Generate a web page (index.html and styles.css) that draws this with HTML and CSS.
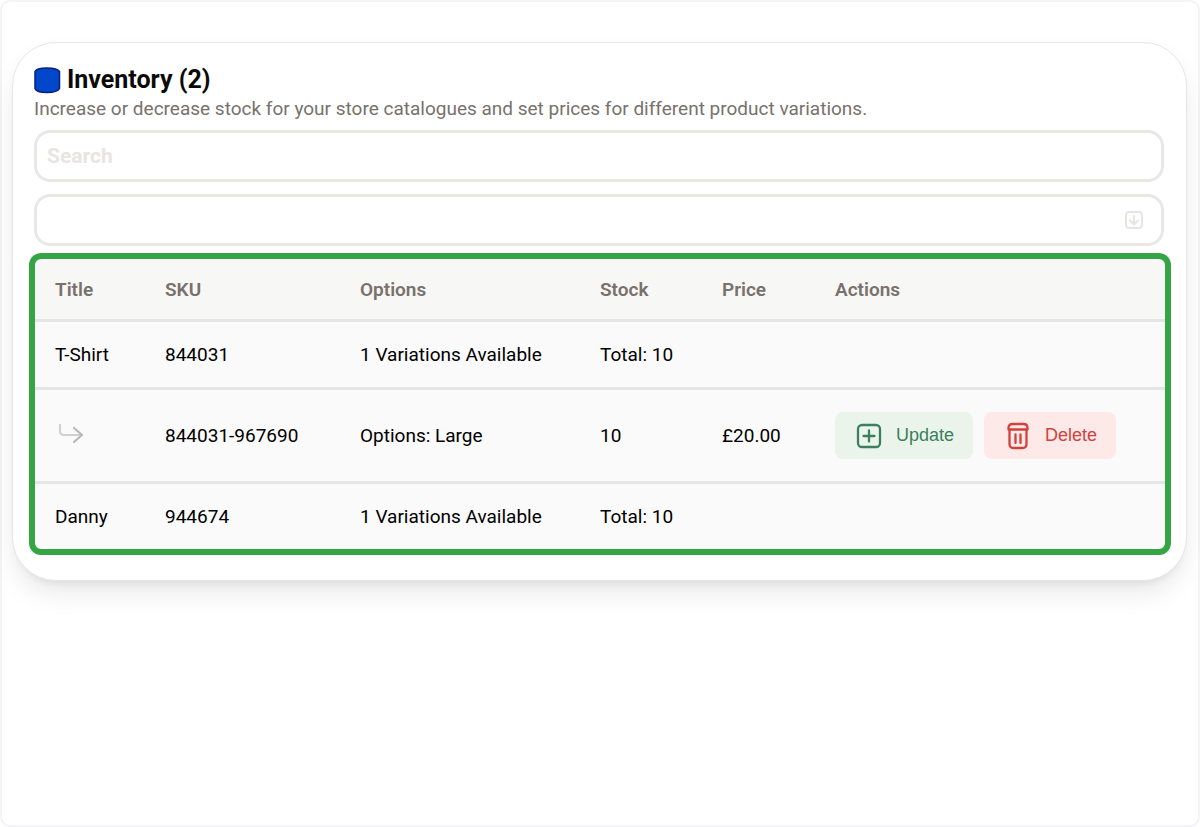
FILE: index.html
```html
<!DOCTYPE html>
<html lang="en">
<head>
  <meta charset="UTF-8" />
  <meta name="viewport" content="width=device-width, initial-scale=1.0" />
  <title>Inventory</title>
  <link rel="stylesheet" href="styles.css">
</head>
<body>
  <main class="page">
    <section class="card">
      <header class="card-header">
        <h1>
          <svg class="logo" viewBox="0 0 27 27" aria-hidden="true">
            <path d="M1 4.500C2 2 7 1 13 1S24 2 25.500 4.500V21.500C24 24.500 19 25.500 13 25.500S2 24.500 1 21.500Z" fill="#0246cb" stroke="#06217c" stroke-width="1.500"/>
          </svg>
          Inventory (2)
        </h1>
        <p>Increase or decrease stock for your store catalogues and set prices for different product variations.</p>
      </header>

      <div class="filters">
        <input class="field" type="text" placeholder="Search" aria-label="Search">
        <div class="select-box">
          <select class="field" aria-label="Catalogue">
            <option></option>
          </select>
          <svg class="select-icon" viewBox="0 0 20 20" fill="none" stroke="#e7e5e4" stroke-width="2" stroke-linecap="round" stroke-linejoin="round" aria-hidden="true">
            <rect x="2" y="2" width="16" height="16" rx="3"/>
            <path d="M10 6v8M6 10.500l4 4 4-4"/>
          </svg>
        </div>
      </div>

      <div class="table-box">
        <table>
          <thead>
            <tr>
              <th class="col-title">Title</th>
              <th class="col-sku">SKU</th>
              <th class="col-options">Options</th>
              <th class="col-stock">Stock</th>
              <th class="col-price">Price</th>
              <th>Actions</th>
            </tr>
          </thead>
          <tbody>
            <tr>
              <td>T-Shirt</td>
              <td>844031</td>
              <td>1 Variations Available</td>
              <td>Total: 10</td>
              <td></td>
              <td></td>
            </tr>
            <tr class="variation">
              <td>
                <svg class="arrow" viewBox="0 0 32 24" fill="none" stroke-width="2.200" stroke-linecap="round" stroke-linejoin="round" aria-hidden="true">
                  <path d="M5 1v6q0 4 4 4h17" stroke="#d0d0d0"/>
                  <path d="M19 4l8 7-8 7" stroke="#b8b8b8"/>
                </svg>
              </td>
              <td>844031-967690</td>
              <td>Options: Large</td>
              <td>10</td>
              <td>£20.00</td>
              <td>
                <div class="actions">
                  <button type="button" class="btn btn-update">
                    <svg viewBox="0 0 28 28" fill="none" stroke="currentColor" stroke-width="2.300" stroke-linecap="round" aria-hidden="true">
                      <rect x="3" y="3" width="22" height="22" rx="4"/>
                      <path d="M14 8.500v11M8.500 14h11"/>
                    </svg>
                    Update
                  </button>
                  <button type="button" class="btn btn-delete">
                    <svg viewBox="0 0 28 28" fill="none" stroke="currentColor" stroke-width="2.300" stroke-linecap="round" stroke-linejoin="round" aria-hidden="true">
                      <path d="M4.500 7.500V6q0-4 4-4h11q4 0 4 4v1.500z"/>
                      <path d="M5.500 8v14q0 4 4 4h9q4 0 4-4V8"/>
                      <path d="M11.500 12.500v8.500M16.500 12.500v8.500"/>
                    </svg>
                    Delete
                  </button>
                </div>
              </td>
            </tr>
            <tr>
              <td>Danny</td>
              <td>944674</td>
              <td>1 Variations Available</td>
              <td>Total: 10</td>
              <td></td>
              <td></td>
            </tr>
          </tbody>
        </table>
      </div>
    </section>
  </main>
</body>
</html>
```
FILE: styles.css
```css
*, *::before, *::after {
  box-sizing: border-box;
}

body {
  margin: 0;
  background: #fff;
  color: #0c0a09;
  font-family: Roboto, sans-serif;
  font-size: 19px;
}

.page {
  min-height: 100vh;
  padding: 40px 11px 40px 10px;
  border: 2px solid #f3f3f8;
  border-radius: 10px;
}

.card {
  padding: 22px 22px 31px 21px;
  border: 1px solid #e7e7e7;
  border-radius: 44px;
  background: #fff;
  box-shadow: 0 14px 28px -4px rgba(0, 0, 0, 0.1), 0 6px 10px -6px rgba(0, 0, 0, 0.1);
}

/* header */
.card-header h1 {
  display: flex;
  align-items: center;
  gap: 6px;
  margin: 0;
  font-size: 25px;
  line-height: 30px;
  font-weight: 700;
}
.card-header p {
  margin: 0;
  line-height: 28px;
  color: #78716c;
}
.logo {
  width: 27px;
  height: 27px;
}

/* search and select */
.filters {
  display: flex;
  flex-direction: column;
  gap: 12px;
  margin: 7px 0 13px;
}
.field {
  display: block;
  width: 100%;
  height: 52px;
  padding: 0 10px;
  border: 3px solid #e9e8e7;
  border-radius: 16px;
  background: #fff;
  color: #0c0a09;
  font-family: inherit;
  font-size: 21px;
  font-weight: 700;
  appearance: none;
}
.field::placeholder {
  color: #e7e5e4;
  opacity: 1;
}
.select-box {
  position: relative;
}
.select-icon {
  position: absolute;
  top: 16px;
  right: 20px;
  width: 20px;
  height: 20px;
  pointer-events: none;
}

/* table */
.table-box {
  overflow: hidden;
  margin: 0 -1px 0 1px;
  border-radius: 6px;
  outline: 6px solid #34a444;
  background: #fafafa;
}
table {
  width: 100%;
  border-collapse: separate;
  border-spacing: 0;
  table-layout: fixed;
}
th, td {
  height: 68px;
  padding: 0 0 0 20px;
  border-bottom: 3px solid #e5e5e5;
  text-align: left;
  white-space: nowrap;
}
th {
  height: 63px;
  background: #f7f7f5;
  color: #78716c;
  font-weight: 600;
}
td {
  color: #000;
}
.variation td {
  height: 94px;
}
tbody tr:last-child td {
  height: 65px;
  border-bottom: 0;
}
.col-title {
  width: 110px;
}
.col-sku {
  width: 195px;
}
.col-options {
  width: 240px;
}
.col-stock {
  width: 122px;
}
.col-price {
  width: 113px;
}
.arrow {
  display: block;
  width: 32px;
  height: 24px;
}

/* buttons */
.actions {
  display: flex;
  gap: 11px;
}
.btn {
  display: flex;
  align-items: center;
  gap: 13px;
  height: 47px;
  padding: 0 19px 0 20px;
  border: 0;
  border-radius: 8px;
  font-family: "Liberation Sans", sans-serif;
  font-size: 18px;
  cursor: pointer;
}
.btn svg {
  width: 28px;
  height: 28px;
}
.btn-update {
  background: #ebf4eb;
  color: #3b7f5c;
}
.btn-delete {
  background: #fdeae8;
  color: #d3403d;
}
```
